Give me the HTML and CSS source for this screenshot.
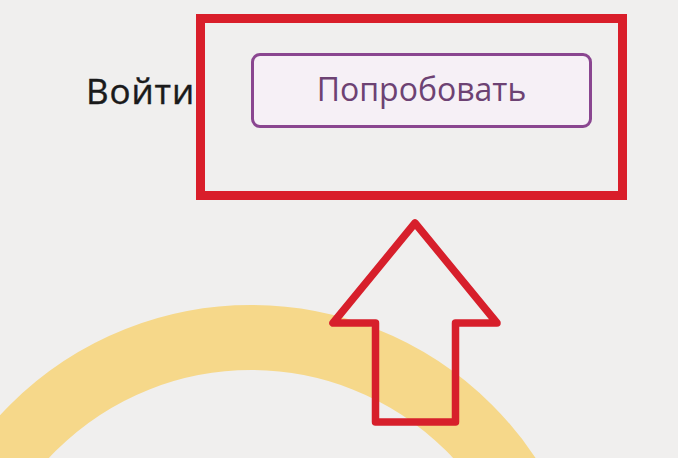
FILE: index.html
```html
<!DOCTYPE html>
<html lang="ru">
<head>
<meta charset="utf-8">
<title>Попробовать</title>
<link rel="stylesheet" href="styles.css">
</head>
<body>
<div class="page">
  <header class="top">
    <a class="login" href="#">Войти</a>
    <div class="frame">
      <button class="try" type="button">Попробовать</button>
    </div>
  </header>
  <svg class="scene" width="678" height="258" viewBox="0 0 678 258" aria-hidden="true">
    <circle cx="251" cy="446" r="308.5" fill="none" stroke="#f6d88a" stroke-width="65"/>
    <path d="M415 23 L333 123 L375.5 123 L375.5 222 L455.5 222 L455.5 123 L497 123 Z" fill="none" stroke="#d71f2b" stroke-width="7.5" stroke-linejoin="round"/>
  </svg>
</div>
</body>
</html>
```

FILE: styles.css
```css
html, body {
  margin: 0;
  padding: 0;
}
body {
  background: #f0efee;
  font-family: "Open Sans", "Noto Sans", sans-serif;
}
.page {
  width: 678px;
  height: 458px;
  overflow: hidden;
  display: flex;
  flex-direction: column;
}
.top {
  display: flex;
  align-items: flex-start;
  padding: 14px 0 0 86px;
  height: 186px;
}
.login {
  width: 110px;
  margin-top: 57px;
  font-size: 35px;
  line-height: 40px;
  color: #1a1a1a;
  text-decoration: none;
  letter-spacing: 0.9px;
  -webkit-text-stroke: 0.4px #1a1a1a;
}
.frame {
  box-sizing: border-box;
  width: 431px;
  height: 186px;
  border: 9px solid #d91e2a;
  padding: 30px 0 0 46px;
}
.try {
  box-sizing: border-box;
  width: 341px;
  height: 75px;
  border: 3px solid #8a4690;
  border-radius: 9px;
  background: #f6f0f6;
  color: #6d4273;
  font-family: "Open Sans", "Noto Sans", sans-serif;
  font-size: 32px;
  line-height: 1;
  padding: 0 0 4px;
  cursor: pointer;
}
.scene {
  display: block;
  flex: none;
}
```
